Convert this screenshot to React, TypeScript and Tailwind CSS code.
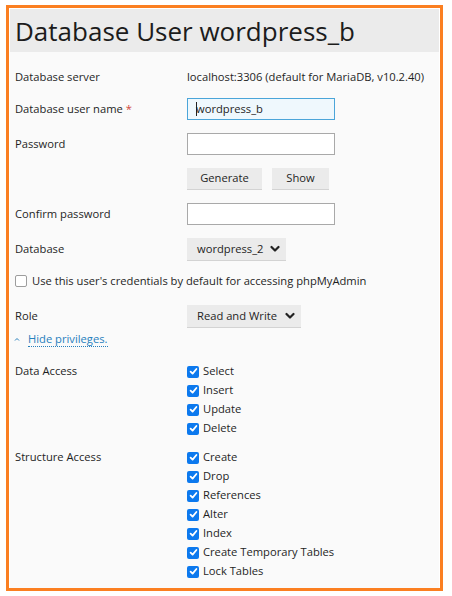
import React from "react";

const font = { fontFamily: '"Open Sans", "Noto Sans", sans-serif' };

function Chevron() {
  return (
    <svg width="10" height="8" viewBox="0 0 10 8" className="ml-auto">
      <path d="M1.5 2 L5 5.5 L8.5 2" fill="none" stroke="#222" strokeWidth="2.2" strokeLinecap="round" strokeLinejoin="round" />
    </svg>
  );
}

function Checked({ label }: { label: string }) {
  return (
    <div className="flex h-[19px] items-center">
      <span className="flex h-[12px] w-[12px] items-center justify-center rounded-[2px] bg-[#0c79ee]">
        <svg width="9" height="9" viewBox="0 0 9 9">
          <path d="M1.6 4.6 L3.6 6.6 L7.4 2" fill="none" stroke="#fff" strokeWidth="1.8" strokeLinecap="round" strokeLinejoin="round" />
        </svg>
      </span>
      <span className="ml-[4px]">{label}</span>
    </div>
  );
}

function Row({ label, children, className = "" }: { label: React.ReactNode; children?: React.ReactNode; className?: string }) {
  return (
    <div className={`flex items-center ${className}`}>
      <div className="w-[172px] shrink-0">{label}</div>
      {children}
    </div>
  );
}

export default function App() {
  const data = ["Select", "Insert", "Update", "Delete"];
  const structure = ["Create", "Drop", "References", "Alter", "Index", "Create Temporary Tables", "Lock Tables"];

  return (
    <div className="h-[596px] w-[452px] bg-white pl-[6px] pt-[5px]" style={font}>
      <div className="h-[586px] w-[437px] border-[3px] border-[#fb7f21] p-[1px]">
        <div className="flex h-[43px] items-center bg-[#ebebeb] pl-[5px] text-[26px] font-medium leading-none text-[#1c1c1c]">
          Database User wordpress_b
        </div>
        <div className="h-[536px] bg-[#fafafa] pl-[5px] pt-[14px] text-[11.2px] text-[#1f1f1f]">
          <Row label="Database server" className="h-[22px]">
            <span>localhost:3306 (default for MariaDB, v10.2.40)</span>
          </Row>

          <Row
            label={
              <span>
                Database user name <span className="text-[#d0473b]">*</span>
              </span>
            }
            className="mt-[10px] h-[22px]"
          >
            <div className="flex h-[22px] w-[148px] items-center border border-[#4ba5d9] bg-[#eff8fd] pl-[8px]">
              <span className="mr-[-1px] h-[14px] w-[1px] bg-[#222]" />
              <span>wordpress_b</span>
            </div>
          </Row>

          <Row label="Password" className="mt-[13px] h-[22px]">
            <div className="h-[22px] w-[148px] border border-[#a9a9a9] bg-white" />
          </Row>

          <Row label="" className="mt-[13px] h-[22px]">
            <div className="flex h-[22px] w-[75px] items-center justify-center border-b border-[#d3d3d3] bg-[#ebebeb]">
              Generate
            </div>
            <div className="ml-[10px] flex h-[22px] w-[57px] items-center justify-center border-b border-[#d3d3d3] bg-[#ebebeb]">
              Show
            </div>
          </Row>

          <Row label="Confirm password" className="mt-[13px] h-[22px]">
            <div className="h-[22px] w-[148px] border border-[#a9a9a9] bg-white" />
          </Row>

          <Row label="Database" className="mt-[13px] h-[23px]">
            <div className="flex h-[23px] w-[99px] items-center border-b border-[#d3d3d3] bg-[#ebebeb] pl-[10px] pr-[6px]">
              <span>wordpress_2</span>
              <Chevron />
            </div>
          </Row>

          <div className="mt-[9px] flex h-[22px] items-center">
            <span className="h-[12px] w-[12px] rounded-[2px] border border-[#9d9d9d] bg-white" />
            <span className="ml-[5px]">Use this user's credentials by default for accessing phpMyAdmin</span>
          </div>

          <Row label="Role" className="mt-[13px] h-[23px]">
            <div className="flex h-[23px] w-[114px] items-center border-b border-[#d3d3d3] bg-[#ebebeb] pl-[10px] pr-[6px]">
              <span>Read and Write</span>
              <Chevron />
            </div>
          </Row>

          <div className="mt-[3px] flex h-[16px] items-center text-[#2780bd]">
            <svg width="6" height="5" viewBox="0 0 6 5" className="ml-[-1px]">
              <path d="M1 3.5 L3 1.5 L5 3.5" fill="none" stroke="#2780bd" strokeWidth="1" />
            </svg>
            <span className="ml-[8px] border-b border-dotted border-[#2780bd] leading-[14px]">Hide privileges.</span>
          </div>

          <div className="mt-[15px] flex">
            <div className="flex h-[19px] w-[172px] shrink-0 items-center">Data Access</div>
            <div className="flex flex-col">
              {data.map((d) => (
                <Checked key={d} label={d} />
              ))}
            </div>
          </div>

          <div className="mt-[10px] flex">
            <div className="flex h-[19px] w-[172px] shrink-0 items-center">Structure Access</div>
            <div className="flex flex-col">
              {structure.map((d) => (
                <Checked key={d} label={d} />
              ))}
            </div>
          </div>
        </div>
      </div>
    </div>
  );
}
